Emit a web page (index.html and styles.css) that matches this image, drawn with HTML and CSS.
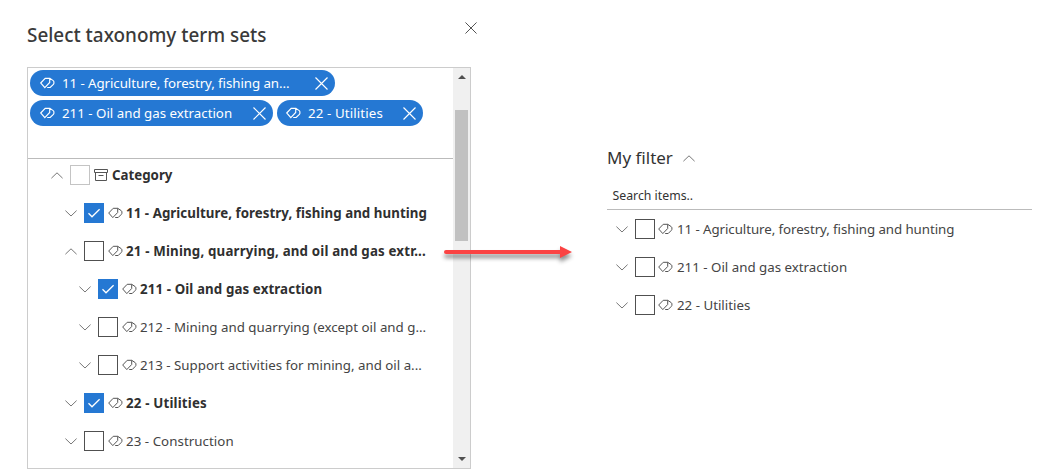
FILE: index.html
```html
<!DOCTYPE html>
<html lang="en">
<head>
<meta charset="utf-8">
<title>Select taxonomy term sets</title>
<link rel="stylesheet" href="styles.css">
</head>
<body>
<svg class="defs" aria-hidden="true">
  <symbol id="tag" viewBox="0 0 15 14"><path d="M.7 7 5.2 2.3H9.7V6.5L4.8 11.6ZM9.7 2.3 13.2 4.6Q13.9 5.1 13.9 6V7.2Q13.9 7.8 13.4 8.3L10.2 11.5H7.2"/></symbol>
  <symbol id="down" viewBox="0 0 12 7"><path d="M.4.6 6 6 11.6.6"/></symbol>
  <symbol id="up" viewBox="0 0 12 7"><path d="M.4 6.2 6 .8 11.6 6.2"/></symbol>
  <symbol id="cross" viewBox="0 0 13 13"><path d="M.5.5 12.5 12.5M12.5.5.5 12.5"/></symbol>
  <symbol id="check" viewBox="0 0 20 20"><path d="M4.5 10.3 8 13.8 15.6 6.2"/></symbol>
  <symbol id="box" viewBox="0 0 14 12"><path d="M.5.5H13.5V3.5H.5ZM1.5 3.5V11.5H12.5V3.5M4.5 6.5H9.5"/></symbol>
</svg>
<main class="page">
  <section class="dialog">
    <header class="dialog-head">
      <h1 class="title"><span>Select taxonomy term sets</span></h1>
      <svg class="close"><use href="#cross"/></svg>
    </header>
    <div class="panel">
      <div class="content">
        <div class="chips">
          <div class="chip chip-a"><svg class="tag"><use href="#tag"/></svg><span class="label tight">11 - Agriculture, forestry, fishing an...</span><svg class="remove"><use href="#cross"/></svg></div>
          <div class="chip chip-b"><svg class="tag"><use href="#tag"/></svg><span class="label">211 - Oil and gas extraction</span><svg class="remove"><use href="#cross"/></svg></div>
          <div class="chip chip-c"><svg class="tag"><use href="#tag"/></svg><span class="label loose">22 - Utilities</span><svg class="remove"><use href="#cross"/></svg></div>
        </div>
        <div class="tree">
          <div class="row"><svg class="chev"><use href="#up"/></svg><span class="cb faint"></span><svg class="tag store"><use href="#box"/></svg><span class="label bold">Category</span></div>
          <div class="row l1"><svg class="chev"><use href="#down"/></svg><span class="cb on"><svg><use href="#check"/></svg></span><svg class="tag"><use href="#tag"/></svg><span class="label bold open">11 - Agriculture, forestry, fishing and hunting</span></div>
          <div class="row l1"><svg class="chev"><use href="#up"/></svg><span class="cb"></span><svg class="tag"><use href="#tag"/></svg><span class="label bold wide">21 - Mining, quarrying, and oil and gas extr...</span></div>
          <div class="row l2"><svg class="chev"><use href="#down"/></svg><span class="cb on"><svg><use href="#check"/></svg></span><svg class="tag"><use href="#tag"/></svg><span class="label bold loose">211 - Oil and gas extraction</span></div>
          <div class="row l2"><svg class="chev"><use href="#down"/></svg><span class="cb"></span><svg class="tag"><use href="#tag"/></svg><span class="label">212 - Mining and quarrying (except oil and g...</span></div>
          <div class="row l2"><svg class="chev"><use href="#down"/></svg><span class="cb"></span><svg class="tag"><use href="#tag"/></svg><span class="label">213 - Support activities for mining, and oil a...</span></div>
          <div class="row l1"><svg class="chev"><use href="#down"/></svg><span class="cb on"><svg><use href="#check"/></svg></span><svg class="tag"><use href="#tag"/></svg><span class="label bold wide">22 - Utilities</span></div>
          <div class="row l1"><svg class="chev"><use href="#down"/></svg><span class="cb"></span><svg class="tag"><use href="#tag"/></svg><span class="label open">23 - Construction</span></div>
        </div>
      </div>
      <div class="scrollbar">
        <svg class="arrow" viewBox="0 0 8 4"><path d="M0 4 4 0 8 4Z"/></svg>
        <div class="thumb"></div>
        <svg class="arrow last" viewBox="0 0 8 4"><path d="M0 0 4 4 8 0Z"/></svg>
      </div>
    </div>
  </section>
  <section class="filter">
    <header class="filter-head"><h2 class="filter-title">My filter</h2><svg class="chev"><use href="#up"/></svg></header>
    <div class="search"><span class="search-text">Search items..</span></div>
    <div class="filter-list">
      <div class="row"><svg class="chev"><use href="#down"/></svg><span class="cb"></span><svg class="tag"><use href="#tag"/></svg><span class="label tight">11 - Agriculture, forestry, fishing and hunting</span></div>
      <div class="row"><svg class="chev"><use href="#down"/></svg><span class="cb"></span><svg class="tag"><use href="#tag"/></svg><span class="label">211 - Oil and gas extraction</span></div>
      <div class="row"><svg class="chev"><use href="#down"/></svg><span class="cb"></span><svg class="tag"><use href="#tag"/></svg><span class="label">22 - Utilities</span></div>
    </div>
  </section>
  <svg class="pointer" viewBox="0 0 140 24"><path d="M4 7H117V1L129 7 117 13V9H4Z"/><path class="shaft" d="M3 7H119"/></svg>
</main>
</body>
</html>
```
FILE: styles.css
```css
* { box-sizing: border-box; }
body { margin: 0; background: #fff; font-family: "Noto Sans", "Open Sans", sans-serif; font-size: 13.3px; color: #444; }
svg { display: block; flex: none; fill: none; stroke: #555; stroke-width: 1; overflow: visible; }
.defs { position: absolute; width: 0; height: 0; }
.page { position: relative; display: flex; width: 1043px; height: 474px; padding-left: 27px; overflow: hidden; }
.dialog { width: 444px; flex: none; }
.dialog-head { display: flex; justify-content: space-between; height: 67px; }
.title { margin: 20px 0 0; font-size: 18.9px; line-height: 30px; font-weight: 500; color: #3a3a3a; white-space: nowrap; }
.close { width: 12px; height: 12px; margin: 22px -6px 0 0; stroke: #444; }
.panel { display: flex; width: 444px; height: 402px; border: 1px solid #ccc; }
.content { width: 425px; }
.chips { display: flex; flex-wrap: wrap; align-content: flex-start; gap: 4px; height: 91px; padding: 2px; border-bottom: 1px solid #bbb; }
.chip { display: flex; align-items: center; height: 26px; padding: 0 7px 0 10px; border-radius: 13px; background: #2578d3; color: #fff; }
.chip svg { stroke: #fff; stroke-width: 1.15; }
.chip .label { margin-left: 7px; }
.chip-a { width: 305px; }
.chip-b { width: 243px; }
.chip-c { width: 146px; padding-left: 9px; }
.remove { width: 13px; height: 13px; margin-left: auto; }
.tag { width: 15px; height: 14px; }
.label { white-space: nowrap; line-height: 20px; }
.tight { letter-spacing: -.07px; }
.open { letter-spacing: .05px; }
.loose { letter-spacing: .11px; }
.wide { letter-spacing: .17px; }
.tree, .filter-list { display: flex; flex-direction: column; gap: 6px; }
.row { display: flex; align-items: center; height: 32px; padding-left: 23px; }
.l1 { padding-left: 37px; }
.l2 { padding-left: 51px; }
.chev { width: 12px; height: 7px; stroke: #777; }
.cb { width: 20px; height: 20px; flex: none; margin: 0 4px 0 7px; border: 1px solid #505050; }
.cb.faint { margin-right: 3px; border-color: #c4c4c4; }
.cb.on { border: 0; background: #2578d3; }
.cb svg { width: 20px; height: 20px; stroke: #fff; stroke-width: 1.3; }
.row .label { margin-left: 3px; }
.row .store + .label { margin-left: 4px; }
.store { width: 14px; height: 12px; margin-left: 1px; }
.bold { font-weight: 700; color: #303030; }
.scrollbar { display: flex; flex-direction: column; align-items: center; width: 17px; background: #f0f0f0; }
.arrow { width: 8px; height: 4px; margin-top: 7px; fill: #505050; stroke: none; }
.thumb { width: 13px; height: 131px; margin-top: 31px; background: #c1c1c1; }
.last { margin: auto 0 7px; }
.filter { width: 425px; margin: 143px 0 0 136px; }
.filter-head { display: flex; align-items: center; gap: 10px; height: 30px; }
.filter-title { margin: -2px 0 0; font-size: 17px; font-weight: 400; color: #333; white-space: nowrap; }
.search { height: 37px; padding: 13px 0 0 5.5px; border-bottom: 1px solid #bbb; font-size: 12.3px; line-height: 20px; color: #333; }
.filter-list { padding-top: 3px; }
.filter-list .row { padding-left: 9px; }
.filter-list .cb { margin-right: 3px; }
.filter-list .label { margin-left: 4px; }
.pointer { position: absolute; left: 443px; top: 245px; width: 140px; height: 24px; fill: #fb4343; stroke: none; filter: drop-shadow(0 4px 2px rgba(0,0,0,.45)); }
.shaft { stroke: #fb4343; stroke-width: 4; stroke-linecap: round; }
```
